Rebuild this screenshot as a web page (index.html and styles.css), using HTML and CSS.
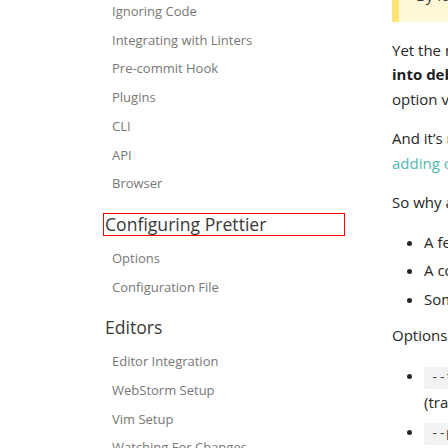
FILE: index.html
```html
<!DOCTYPE html>
<html lang="en">
<head>
<meta charset="utf-8">
<title>Option Philosophy · Prettier</title>
<link rel="stylesheet" href="styles.css">
</head>
<body>
<div class="page">
  <nav class="sidebar">
    <ul class="nav-list">
      <li>Ignoring Code</li>
      <li>Integrating with Linters</li>
      <li>Pre-commit Hook</li>
      <li>Plugins</li>
      <li>CLI</li>
      <li>API</li>
      <li>Browser</li>
    </ul>
    <h3 class="nav-heading nav-heading--focused">Configuring Prettier</h3>
    <ul class="nav-list">
      <li>Options</li>
      <li>Configuration File</li>
    </ul>
    <h3 class="nav-heading">Editors</h3>
    <ul class="nav-list">
      <li>Editor Integration</li>
      <li>WebStorm Setup</li>
      <li>Vim Setup</li>
      <li>Watching For Changes</li>
    </ul>
  </nav>
  <main class="content">
    <div class="callout">
      <p>By far the biggest reason for adopting Prettier is to stop all the ongoing debates over styles.</p>
    </div>
    <p>Yet the more options Prettier has, the further<br><strong>into debates about style it falls</strong>, and the<br>option values become a new bikeshed.</p>
    <p>And it’s not only a question of style. Every option<br><a href="#">adding complexity</a> makes Prettier harder.</p>
    <p>So why are there any options at all?</p>
    <ul class="bullets">
      <li>A few were added during Prettier’s infancy.</li>
      <li>A couple were added after “great demand.”</li>
      <li>Some were added for compatibility reasons.</li>
    </ul>
    <p>Options that are easy to add are still avoided:</p>
    <ul class="bullets">
      <li><code>--trailing-comma es5</code><br>(transitional default)</li>
      <li><code>--prose-wrap</code></li>
    </ul>
  </main>
</div>
</body>
</html>
```
FILE: styles.css
```css
html, body {
  margin: 0;
  padding: 0;
  background: #ffffff;
  overflow: hidden;
}

body {
  width: 448px;
  height: 448px;
  font-family: "Open Sans", "Noto Sans", sans-serif;
}

.page {
  display: flex;
  align-items: flex-start;
  width: 900px;
  margin-top: -3px;
}

.sidebar {
  width: 240px;
  margin-left: 104px;
  flex: none;
}

.nav-list {
  list-style: none;
  margin: 0;
  padding: 0;
}

.nav-list li {
  font-size: 13px;
  line-height: 28.7px;
  color: #777777;
  padding-left: 8px;
  white-space: nowrap;
}

.nav-heading {
  margin: 16px 0 9px;
  font-size: 17.6px;
  line-height: 21px;
  font-weight: 400;
  color: #393939;
  padding-left: 1px;
}

.nav-heading--focused {
  outline: 1px solid #ff0000;
  outline-offset: 0;
}

.content {
  margin-left: 48px;
  width: 460px;
  flex: none;
  font-size: 15px;
  line-height: 24.5px;
  color: #262626;
}

.content p {
  margin: 0 0 15px;
  white-space: nowrap;
}

.callout {
  background: #fff8d6;
  border-left: 7px solid #ffe47a;
  padding: 0 0 14px 17px;
  margin: -14px 0 16px;
}

.callout p {
  margin: 0;
  color: #3a3a3a;
}

.content strong {
  font-weight: 700;
  color: #1e1e1e;
}

.content a {
  color: #53b8b5;
  text-decoration: none;
}

.bullets {
  margin: 0 0 12px;
  padding-left: 32px;
  white-space: nowrap;
}

.bullets li {
  margin-bottom: 4px;
}

.bullets li::marker {
  color: #262626;
}

code {
  font-family: "Liberation Mono", "DejaVu Sans Mono", monospace;
  font-size: 12.5px;
  color: #4a4a4a;
  background: #f2f2f2;
  border-radius: 3px;
  padding: 4px 7px;
}
```
